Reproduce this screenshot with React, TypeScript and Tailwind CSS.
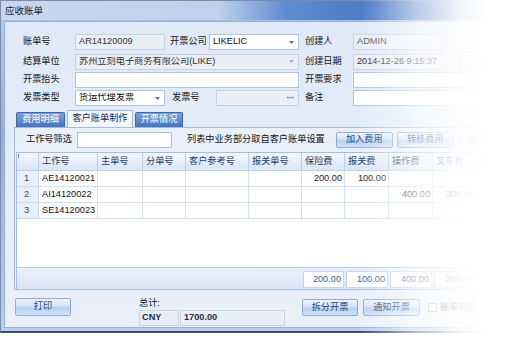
import React from 'react';

const Arrow: React.FC<{ dim?: boolean }> = ({ dim }) => (
    <svg width="5" height="3" viewBox="0 0 5 3" className="shrink-0">
        <path d="M0 0H5L2.5 3Z" fill={dim ? '#9fb0c8' : '#4f74b3'} />
    </svg>
);

type FieldProps = { value?: string; disabled?: boolean; arrow?: boolean; dots?: boolean; className?: string };

const Field: React.FC<FieldProps> = ({ value = '', disabled, arrow, dots, className = '' }) => (
    <div
        className={
            'h-[16px] shrink-0 flex items-center pl-[3px] pr-[4px] border leading-none ' +
            (disabled ? 'bg-[#eaeff6] border-[#c6d3e4] text-[#333] ' : 'bg-white border-[#afc4e2] text-[#111] ') +
            className
        }
    >
        <span className="flex-1 whitespace-nowrap overflow-hidden">{value}</span>
        {arrow && <Arrow dim={disabled} />}
        {dots && <span className="text-[#3d63a8] text-[9px] leading-none font-bold tracking-[-0.5px]">···</span>}
    </div>
);

const Label: React.FC<{ children: React.ReactNode; className?: string }> = ({ children, className = '' }) => (
    <span className={'shrink-0 leading-none whitespace-nowrap text-[#141414] ' + className}>{children}</span>
);

const Btn: React.FC<{ children: React.ReactNode; className?: string }> = ({ children, className = '' }) => (
    <div
        className={
            'shrink-0 flex items-center justify-center rounded-[2px] border border-[#8eabd6] text-[#25457c] leading-none bg-[linear-gradient(to_bottom,#eef5fd_0%,#d3e3f6_45%,#b7d0ef_55%,#d0e2f7_100%)] ' +
            className
        }
    >
        {children}
    </div>
);

const columns = ['', '工作号', '主单号', '分单号', '客户参考号', '报关单号', '保险费', '报关费', '操作费', '叉车费', '商检费'];

const rows = [
    { no: '1', job: 'AE14120021', fees: ['200.00', '100.00', '', '', ''] },
    { no: '2', job: 'AI14120022', fees: ['', '', '400.00', '300.00', ''] },
    { no: '3', job: 'SE14120023', fees: ['', '', '', '', ''] },
];

const gridCols = 'grid grid-cols-[22px_59px_45px_43px_63px_53px_43px_44px_44px_44px_60px]';

const App: React.FC = () => {
    return (
        <div className="relative w-[520px] h-[360px] bg-white overflow-hidden text-[9.2px] font-['Liberation_Sans','Noto_Sans_CJK_SC',sans-serif]">
            {/* 窗口 */}
            <div className="h-[333px] flex flex-col border border-[#7b8ba6] border-b-[#3f4f6b] border-b-2 bg-[linear-gradient(to_bottom,#b9cfee,#8fb0e0_40%,#b9cfee)]">
                {/* 标题栏 */}
                <div className="h-[20px] shrink-0 flex items-center pl-[4px] border-b border-[#a9bedd] bg-[linear-gradient(to_right,#c9d8ed_0%,#bfd1eb_42%,#5f8bd0_55%,#4a7ac7_72%,#4a7ac7_100%)]">
                    <span className="text-[#1a1a1a] text-[9.5px] leading-none">应收账单</span>
                </div>

                <div className="flex-1 flex flex-col px-[3px] pb-[3px]">
                    <div className="flex-1 flex flex-col border border-[#93b1db] bg-[linear-gradient(to_bottom,#dfe9f7,#e9f0fa)]">
                        {/* 表头信息 */}
                        <div className="pt-[12px] pl-[18px] flex flex-col">
                            <div className="flex items-center">
                                <Label className="w-[52px]">账单号</Label>
                                <Field className="w-[90px]" value="AR14120009" disabled />
                                <Label className="ml-[5px] w-[39px]">开票公司</Label>
                                <Field className="w-[90px]" value="LIKELIC" arrow />
                                <Label className="ml-[6px] w-[48px]">创建人</Label>
                                <Field className="w-[90px] text-[#556]" value="ADMIN" disabled />
                            </div>
                            <div className="flex items-center mt-[2px]">
                                <Label className="w-[52px]">结算单位</Label>
                                <Field className="w-[224px]" value="苏州立刻电子商务有限公司(LIKE)" disabled arrow />
                                <Label className="ml-[6px] w-[48px]">创建日期</Label>
                                <Field className="w-[90px]" value="2014-12-26 9:15:37" disabled />
                                <Btn className="ml-[16px] w-[60px] h-[19px] text-[#8aa0c4]">拆开票</Btn>
                            </div>
                            <div className="flex items-center mt-[1px]">
                                <Label className="w-[52px]">开票抬头</Label>
                                <Field className="w-[224px]" />
                                <Label className="ml-[6px] w-[48px]">开票要求</Label>
                                <Field className="flex-1" />
                            </div>
                            <div className="flex items-center mt-[2px]">
                                <Label className="w-[52px]">发票类型</Label>
                                <Field className="w-[90px]" value="货运代理发票" arrow />
                                <Label className="ml-[7px] w-[44px]">发票号</Label>
                                <Field className="w-[83px]" disabled dots />
                                <Label className="ml-[6px] w-[48px]">备注</Label>
                                <Field className="flex-1" />
                            </div>
                        </div>

                        {/* 选项卡 */}
                        <div className="mt-[4px] ml-[11px] h-[17px] flex items-end gap-[2px]">
                            <div className="h-[15px] w-[49px] flex items-center justify-center rounded-t-[2px] border border-b-0 border-[#3d67ab] bg-[linear-gradient(to_bottom,#7ba2dc,#4474c0)] text-white leading-none">
                                费用明细
                            </div>
                            <div className="h-[17px] w-[66px] flex items-center justify-center rounded-t-[2px] border border-b-0 border-[#9fb8db] bg-[#f3f7fc] text-[#1b2c48] leading-none">
                                客户账单制作
                            </div>
                            <div className="h-[15px] w-[48px] flex items-center justify-center rounded-t-[2px] border border-b-0 border-[#3d67ab] bg-[linear-gradient(to_bottom,#7ba2dc,#4474c0)] text-white leading-none">
                                开票情况
                            </div>
                        </div>

                        {/* 选项卡内容 */}
                        <div className="ml-[9px] mr-[8px] h-[163px] flex flex-col border border-[#a3bbdd] bg-[#e9f0fa]">
                            <div className="mt-[4px] pl-[11px] flex items-center h-[16px]">
                                <Label className="w-[51px]">工作号筛选</Label>
                                <Field className="w-[95px]" />
                                <Label className="ml-[15px]">列表中业务部分取自客户账单设置</Label>
                                <Btn className="ml-[11px] w-[57px] h-[16px]">加入费用</Btn>
                                <Btn className="ml-[4px] w-[57px] h-[16px] text-[#9aaccb]">转移费用</Btn>
                                <Btn className="ml-[5px] w-[57px] h-[16px] text-[#9aaccb]">删除费用</Btn>
                            </div>

                            {/* 表格 */}
                            <div className="mt-[4px] ml-[1px] flex-1 flex flex-col border-l border-t border-[#a7bddd] bg-white">
                                <div className={gridCols + ' h-[18px] bg-[linear-gradient(to_bottom,#f1f6fc,#d8e5f5)]'}>
                                    {columns.map((c, i) => (
                                        <div key={i} className="relative flex items-center pl-[3px] border-r border-b border-[#bccfe8] text-[#1f3d6e] leading-none">
                                            {i === 0 && <span className="absolute left-[1px] top-[1px] w-[1px] h-[4px] bg-[#6b86b0]" />}
                                            {c}
                                        </div>
                                    ))}
                                </div>
                                {rows.map((r) => (
                                    <div key={r.no} className={gridCols + ' h-[16px]'}>
                                        <div className="flex items-center pl-[7px] bg-[#e7eff9] border-r border-b border-[#c9d8ec] text-[#2a4b86] leading-none">{r.no}</div>
                                        <div className="flex items-center pl-[3px] border-r border-b border-[#d3e0f0] text-[#111] leading-none">{r.job}</div>
                                        {['', '', '', ''].map((_, i) => (
                                            <div key={i} className="border-r border-b border-[#d3e0f0]" />
                                        ))}
                                        {r.fees.map((f, i) => (
                                            <div key={'f' + i} className="flex items-center justify-end pr-[2px] border-r border-b border-[#d3e0f0] text-[#222] leading-none">
                                                {f}
                                            </div>
                                        ))}
                                    </div>
                                ))}
                                <div className="flex-1" />
                                <div className={gridCols + ' h-[22px] border-t border-[#b3c8e6] bg-[linear-gradient(to_bottom,#e9f0fa,#d9e6f6)] pt-[3px] pb-[1px]'}>
                                    <div className="col-span-6" />
                                    {['200.00', '100.00', '400.00', '300.00', ''].map((v, i) => (
                                        <div key={i} className="mr-[1px] ml-[1px] flex items-center justify-end pr-[2px] bg-white border border-[#c6d5ea] text-[#3d5a8e] leading-none">
                                            {v}
                                        </div>
                                    ))}
                                </div>
                            </div>
                        </div>

                        {/* 底部 */}
                        <div className="mt-[8px] ml-[10px] flex items-start">
                            <Btn className="w-[56px] h-[18px] text-[#23416f]">打印</Btn>
                            <div className="ml-[68px] flex flex-col">
                                <Label className="mt-[1px] h-[9px]">总计:</Label>
                                <div className="mt-[2px] flex gap-[1px]">
                                    <div className="w-[40px] h-[16px] flex items-center pl-[2px] bg-[#e8edf4] border border-[#c8d4e4] font-bold text-[#1f2d45] leading-none">CNY</div>
                                    <div className="w-[105px] h-[16px] flex items-center pl-[3px] bg-[#eaeff6] border border-[#c8d4e4] font-bold text-[#1f2d45] leading-none">1700.00</div>
                                </div>
                            </div>
                            <Btn className="ml-[17px] mt-[1px] w-[56px] h-[17px]">拆分开票</Btn>
                            <Btn className="ml-[5px] mt-[1px] w-[57px] h-[17px] text-[#5873a0]">通知开票</Btn>
                            <div className="ml-[8px] mt-[5px] flex items-center gap-[3px]">
                                <span className="w-[9px] h-[9px] border border-[#9aaac0] bg-white" />
                                <Label className="text-[#555]">账单完成</Label>
                            </div>
                        </div>
                    </div>
                </div>
            </div>

            {/* 右侧渐隐 */}
            <div className="absolute top-0 bottom-0 left-[360px] right-0 bg-[linear-gradient(to_right,rgba(255,255,255,0)_0px,rgba(255,255,255,0.6)_55px,rgba(255,255,255,0.92)_100px,#fff_125px)]" />
        </div>
    );
};

export default App;
